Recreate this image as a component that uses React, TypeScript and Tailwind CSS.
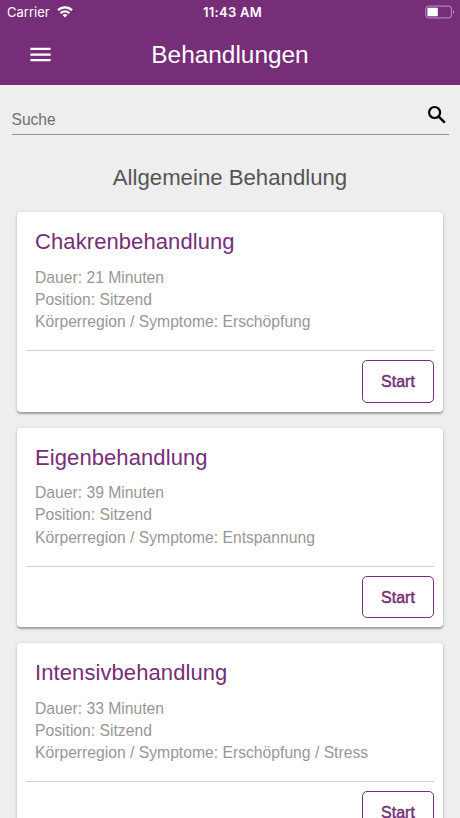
import { MdMenu } from "react-icons/md";

const treatments = [
  {
    title: "Chakrenbehandlung",
    duration: "21 Minuten",
    position: "Sitzend",
    symptoms: "Erschöpfung"
  },
  {
    title: "Eigenbehandlung",
    duration: "39 Minuten",
    position: "Sitzend",
    symptoms: "Entspannung"
  },
  {
    title: "Intensivbehandlung",
    duration: "33 Minuten",
    position: "Sitzend",
    symptoms: "Erschöpfung / Stress"
  }
];

type Treatment = (typeof treatments)[number];

function StatusBar() {
  return (
    <div className="grid h-6 grid-cols-3 items-center pl-[7px] pr-[5px] font-['Inter',sans-serif] text-white">
      <div className="flex items-center gap-[7px]">
        <span className="text-[13px] leading-6">Carrier</span>
        <svg width="16" height="12" viewBox="0 0 16 12" fill="none" stroke="currentColor" strokeWidth="2.3">
          <path d="M1 4.3a10 10 0 0 1 14 0" />
          <path d="M3.6 7.2a6.3 6.3 0 0 1 8.8 0" />
          <path d="M8 11.6 5.5 9.1a3.6 3.6 0 0 1 5 0z" fill="currentColor" stroke="none" />
        </svg>
      </div>
      <span className="pl-[3px] text-center text-[13px] font-semibold leading-6 tracking-[0.3px]">11:43 AM</span>
      <svg className="-mt-px justify-self-end" width="30" height="14" viewBox="0 0 30 14" fill="none">
        <rect x="0.8" y="1.1" width="25.6" height="11.8" rx="2.6" stroke="#fff" strokeOpacity="0.5" />
        <rect x="2.4" y="2.8" width="10.4" height="8.4" rx="0.8" fill="#fff" />
        <path d="M28 5.2c1.6.7 1.6 2.9 0 3.6z" fill="#fff" fillOpacity="0.5" />
      </svg>
    </div>
  );
}

function SearchIcon() {
  return (
    <svg className="-mt-[3px]" width="24" height="24" viewBox="0 0 24 24" fill="none" stroke="#000" strokeWidth="2.2">
      <circle cx="9.6" cy="9.5" r="5.5" />
      <path d="m13.7 13.6 6.1 6.1" strokeWidth="2.4" />
    </svg>
  );
}

function TreatmentCard({ title, duration, position, symptoms }: Treatment) {
  return (
    <article className="h-[199.5px] shrink-0 rounded-[4px] bg-white px-[9px] shadow-[0_1.5px_1.5px_rgba(0,0,0,0.25),0_1px_4px_rgba(0,0,0,0.14)]">
      <div className="h-[139px] border-b border-[#cfcfcf] px-[9px] pt-[15px]">
        <h3 className="text-[22px] leading-[30px] tracking-[0.09px] text-[#762e78]">{title}</h3>
        <div className="mt-[9.5px] text-[15.7px] leading-[22.3px] text-[#979797]">
          <p>Dauer: {duration}</p>
          <p>Position: {position}</p>
          <p>Körperregion / Symptome: {symptoms}</p>
        </div>
      </div>
      <div className="flex justify-end pt-[9px]">
        <button className="h-[42.5px] w-[72px] rounded-[5px] border-[1.3px] border-[#762e78] pt-[2px] text-[16px] text-[#762e78] [-webkit-text-stroke:0.45px_#762e78]">
          Start
        </button>
      </div>
    </article>
  );
}

export default function App() {
  return (
    <div className="flex h-screen flex-col overflow-hidden bg-[#eeeeee] font-['Liberation_Sans',Arial,sans-serif]">
      <header className="h-[84.5px] shrink-0 bg-[#762e78] text-white">
        <StatusBar />
        <div className="grid h-[61px] grid-cols-[80px_1fr_80px] items-center">
          <MdMenu className="justify-self-center" size={27} />
          <h1 className="text-center text-[24.4px] leading-8">Behandlungen</h1>
        </div>
      </header>

      <main className="flex flex-col">
        <div className="ml-[11.5px] mr-[11.5px] mt-[15px] flex h-[35px] items-center justify-between border-b border-[#929694]">
          <span className="pt-[6px] text-[15.6px] text-[#717171]">Suche</span>
          <SearchIcon />
        </div>
        <h2 className="mt-[27px] text-center text-[22.2px] leading-8 text-[#555]">
          Allgemeine Behandlung
        </h2>
        <div className="mx-[17px] mt-[18.7px] flex flex-col gap-4">
          {treatments.map((t) => (
            <TreatmentCard key={t.title} {...t} />
          ))}
        </div>
      </main>
    </div>
  );
}
